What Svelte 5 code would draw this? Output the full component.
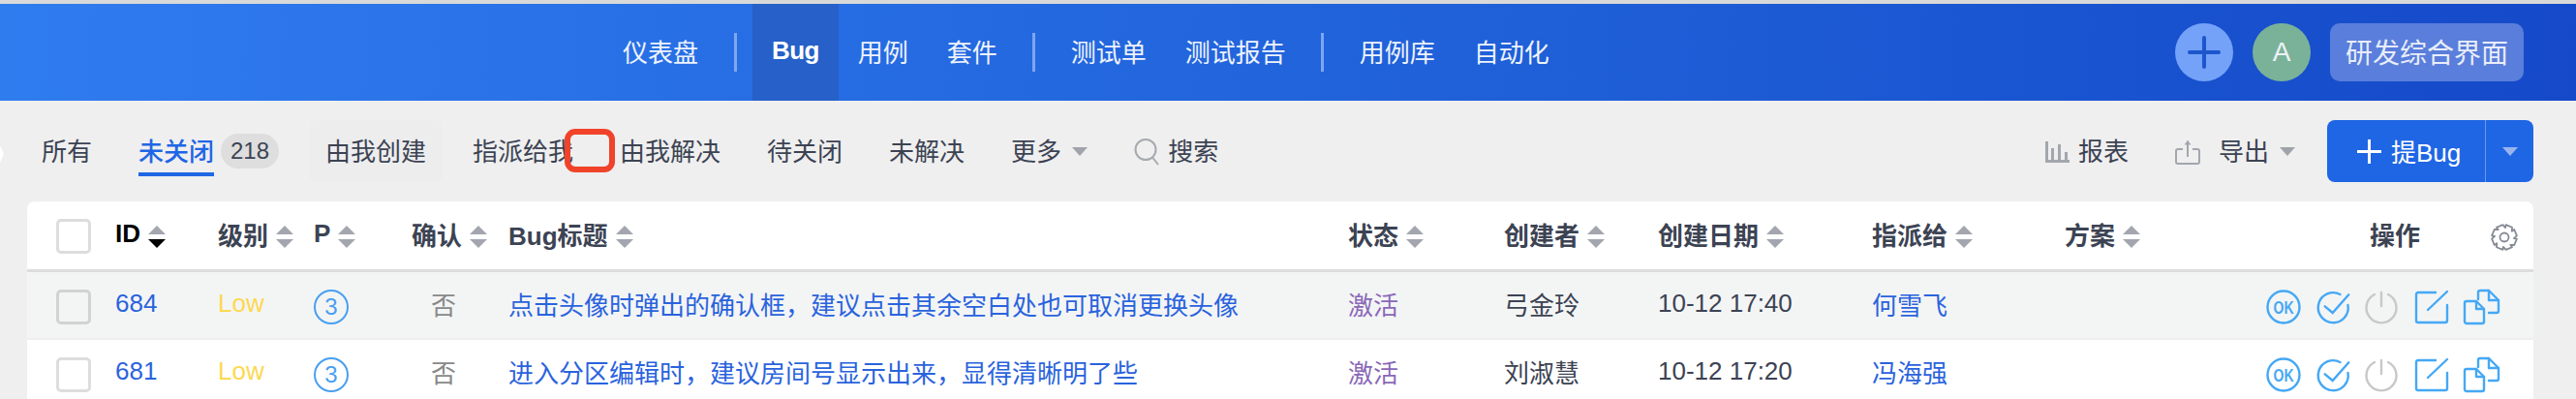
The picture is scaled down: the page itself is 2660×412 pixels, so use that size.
<script>
  const nav1 = ['用例', '套件']
  const nav2 = ['测试单', '测试报告']
  const nav3 = ['用例库', '自动化']

  const filters = ['指派给我', '由我解决', '待关闭', '未解决']

  const heads = [
    { label: 'ID', active: true },
    { label: '级别' },
    { label: 'P' },
    { label: '确认' },
    { label: 'Bug标题' },
    { label: '状态' },
    { label: '创建者' },
    { label: '创建日期' },
    { label: '指派给' },
    { label: '方案' }
  ]

  const bugs = [
    { id: 684, title: '点击头像时弹出的确认框，建议点击其余空白处也可取消更换头像', by: '弓金玲', date: '10-12 17:40', to: '何雪飞' },
    { id: 681, title: '进入分区编辑时，建议房间号显示出来，显得清晰明了些', by: '刘淑慧', date: '10-12 17:20', to: '冯海强' }
  ]

  // eight-toothed cog outline
  function cogPath(cx, cy, outer, inner) {
    const pts = []
    for (let t = 0; t < 8; t++) {
      const a = (t * Math.PI) / 4 + Math.PI / 8
      for (const [d, r] of [[-0.27, outer], [0.27, outer], [0.5, inner]]) {
        pts.push(`${(cx + r * Math.cos(a + d)).toFixed(2)} ${(cy + r * Math.sin(a + d)).toFixed(2)}`)
      }
    }
    return 'M' + pts.join('L') + 'Z'
  }
</script>

<div class="page">
  <header class="topbar">
    <nav class="nav">
      <a class="nav-item">仪表盘</a>
      <i class="nav-sep"></i>
      <a class="nav-item on">Bug</a>
      {#each nav1 as n}<a class="nav-item">{n}</a>{/each}
      <i class="nav-sep"></i>
      {#each nav2 as n}<a class="nav-item">{n}</a>{/each}
      <i class="nav-sep"></i>
      {#each nav3 as n}<a class="nav-item">{n}</a>{/each}
    </nav>
    <div class="top-right">
      <span class="add">
        <svg width="34" height="34" viewBox="0 0 34 34"><path d="M17 2V32M2 17H32" stroke="#1d56cc" stroke-width="4" stroke-linecap="round" fill="none" /></svg>
      </span>
      <span class="avatar">A</span>
      <span class="switch">研发综合界面</span>
    </div>
  </header>

  <section class="toolbar">
    <i class="edge"></i>
    <a class="tab">所有</a>
    <a class="tab current"><span class="tab-text">未关闭</span><span class="badge">218</span></a>
    <a class="tab boxed">由我创建</a>
    {#each filters as f}<a class="tab">{f}</a>{/each}
    <a class="tab">更多<i class="caret"></i></a>
    <a class="tab search">
      <svg width="26" height="28" viewBox="0 0 26 28" fill="none" stroke="#a6a9b0" stroke-width="2"><circle cx="12" cy="11.500" r="10.500" /><path d="M19 19.500L25 27" /></svg>
      搜索
    </a>
    <span class="mark"></span>

    <div class="actions">
      <a class="act">
        <svg width="25" height="22" viewBox="0 0 25 22" fill="#a3a6ae"><path d="M0 0H3V19H25V22H0Z" /><rect x="6" y="7" width="3" height="12" /><rect x="13" y="3" width="3" height="16" /><rect x="20" y="11" width="3" height="8" /></svg>
        报表
      </a>
      <a class="act export">
        <svg width="26" height="26" viewBox="0 0 26 26" fill="none" stroke="#a3a6ae" stroke-width="2"><path d="M8 10H3a2 2 0 0 0-2 2V23a2 2 0 0 0 2 2H23a2 2 0 0 0 2-2V12a2 2 0 0 0-2-2H18" /><path d="M13 18V1.500" /><path d="M9.500 5.500L13 1L16.500 5.500Z" fill="#a3a6ae" stroke="none" /></svg>
        <span class="export-text">导出</span><i class="caret"></i>
      </a>
      <div class="create">
        <a class="create-main">
          <svg width="27" height="27" viewBox="0 0 27 27"><path d="M13.500 1V26M1 13.500H26" stroke="#fff" stroke-width="3" fill="none" /></svg>
          提Bug
        </a>
        <a class="create-more"><i class="caret light"></i></a>
      </div>
    </div>
  </section>

  <section class="card">
    <div class="row head">
      <span class="check"></span>
      {#each heads as h}
        <span class="th" class:dark={h.active}>
          {h.label}
          <span class="sort" class:active={h.active}><i class="up"></i><i class="down"></i></span>
        </span>
      {/each}
      <span class="ops-head">
        <span class="ops-title">操作</span>
        <svg class="gear" width="28" height="28" viewBox="0 0 28 28" fill="none" stroke="#858a93" stroke-width="1.800" stroke-linejoin="round"><path d={cogPath(14, 14, 13, 10)} /><circle cx="14" cy="14" r="4.500" /></svg>
      </span>
    </div>

    {#each bugs as b, i}
      <div class="row body" class:hover={i === 0}>
        <span class="check"></span>
        <a class="id cell">{b.id}</a>
        <span class="low cell">Low</span>
        <span class="pri"><b>3</b></span>
        <span class="no cell">否</span>
        <a class="title cell">{b.title}</a>
        <span class="status cell">激活</span>
        <span class="cell">{b.by}</span>
        <span class="cell">{b.date}</span>
        <a class="to cell">{b.to}</a>
        <span></span>
        <span class="ops">
          <svg width="36" height="36" viewBox="0 0 36 36" fill="none" stroke="#45a8f5" stroke-width="2.400">
            <circle cx="18" cy="18" r="16.500" />
            <text x="18" y="24.500" text-anchor="middle" textLength="21" lengthAdjust="spacingAndGlyphs" stroke="none" fill="#45a8f5" font-size="18" font-weight="700">OK</text>
          </svg>
          <svg width="36" height="36" viewBox="0 0 36 36" fill="none" stroke="#45a8f5" stroke-width="2.400" stroke-linecap="round">
            <path d="M25.500 5A15.500 15.500 0 1 0 33.500 16" />
            <path d="M9.700 17.300L17.700 24L34.300 5.300" />
          </svg>
          <svg width="36" height="36" viewBox="0 0 36 36" fill="none" stroke="#c8c8c8" stroke-width="2.400" stroke-linecap="round">
            <path d="M10 5A15.500 15.500 0 1 0 24 5" />
            <path d="M17 3V17" />
          </svg>
          <svg width="36" height="36" viewBox="0 0 36 36" fill="none" stroke="#45a8f5" stroke-width="2.400" stroke-linecap="round">
            <path d="M22 3H4a2 2 0 0 0-2 2V32a2 2 0 0 0 2 2H32a2 2 0 0 0 2-2V16" />
            <path d="M14 21L34 2" />
          </svg>
          <svg width="36" height="36" viewBox="0 0 36 36" fill="none" stroke="#45a8f5" stroke-width="2.400" stroke-linejoin="round" stroke-linecap="round">
            <path d="M3 12H13L21 20V33a2 2 0 0 1-2 2H3a2 2 0 0 1-2-2V14a2 2 0 0 1 2-2Z" />
            <path d="M13 12V20H21" />
            <path d="M15 10V3a2 2 0 0 1 2-2H26L36 11V22a2 2 0 0 1-2 2H26" />
            <path d="M26 1V11H36" />
          </svg>
        </span>
      </div>
    {/each}
  </section>
</div>

<style>
  :global(html), :global(body) {
    margin: 0;
    overflow: hidden;
  }

  .page {
    height: 412px;
    overflow: hidden;
    background: #efefef;
    border-top: 4px solid #d9d9d9;
    box-sizing: border-box;
    font-family: "Liberation Sans", "Noto Sans CJK SC", sans-serif;
    font-size: 26px;
    color: #3c4353;
  }

  a { color: inherit; text-decoration: none; }
  i { display: block; }

  .topbar {
    height: 100px;
    display: flex;
    align-items: center;
    background: linear-gradient(92deg, #2f7cef 0%, #1c5ad4 70%, #1549c9 100%);
    color: #fff;
  }

  .nav {
    height: 100%;
    display: flex;
    align-items: center;
    padding-left: 623px;
  }

  .nav-item {
    height: 100%;
    display: flex;
    align-items: center;
    padding: 0 20px 3px;
    box-sizing: border-box;
    color: #eef3fd;
  }

  .nav-item.on {
    background: #2660c8;
    color: #fff;
    font-weight: 700;
    letter-spacing: -0.6px;
  }

  .nav-sep {
    width: 3px;
    height: 40px;
    margin: 0 16.500px;
    background: #7fa6ee;
  }

  .top-right {
    margin-left: auto;
    margin-right: 54px;
    display: flex;
    align-items: center;
    gap: 20px;
  }

  .add, .avatar {
    width: 60px;
    height: 60px;
    border-radius: 50%;
    display: flex;
    align-items: center;
    justify-content: center;
  }

  .add { background: #74a2f8; }

  .avatar {
    background: #7ab299;
    color: #edf2f7;
    font-size: 28px;
  }

  .switch {
    width: 200px;
    height: 60px;
    padding-bottom: 3px;
    box-sizing: border-box;
    border-radius: 10px;
    background: #5a7edb;
    color: #e8edf9;
    font-size: 28px;
    display: flex;
    align-items: center;
    justify-content: center;
  }

  .toolbar {
    position: relative;
    height: 104px;
    display: flex;
    align-items: center;
    padding: 0 44px 0 26px;
    box-sizing: border-box;
    gap: 14px;
  }

  .edge {
    position: absolute;
    left: 0;
    top: 46px;
    width: 4px;
    height: 18px;
    background: #fff;
    clip-path: polygon(0 0, 100% 50%, 0 100%);
  }

  .tab {
    height: 64px;
    padding: 0 17px 4px;
    box-sizing: border-box;
    display: flex;
    align-items: center;
    border-radius: 8px;
  }

  .tab.boxed { background: #ededed; }

  .tab-text {
    position: relative;
    color: #1f66e5;
    font-weight: 500;
  }

  .tab-text::after {
    content: "";
    position: absolute;
    left: 0;
    right: 0;
    bottom: -9px;
    height: 4px;
    background: #1f66e5;
  }

  .badge {
    margin: 4px 0 0 7px;
    width: 60px;
    height: 36px;
    border-radius: 18px;
    background: #dedede;
    text-align: center;
    line-height: 36px;
    font-size: 24px;
  }

  .caret {
    width: 0;
    height: 0;
    margin: 4px 0 0 11px;
    border-left: 8px solid transparent;
    border-right: 8px solid transparent;
    border-top: 9px solid #a0a3aa;
  }

  .caret.light { border-top-color: #9ab5ee; margin: 0; }

  .search { gap: 9px; }
  .search svg { margin-top: 6px; }

  .mark {
    position: absolute;
    left: 583px;
    top: 29px;
    width: 40px;
    height: 33px;
    border: 6px solid #f0432a;
    border-radius: 11px;
  }

  .actions {
    margin-left: auto;
    display: flex;
    align-items: center;
  }

  .act {
    display: flex;
    align-items: center;
    gap: 9px;
    padding-bottom: 3px;
  }

  .act svg { margin-top: 5px; }

  .export { margin-left: 48px; margin-right: 33px; }
  .export-text { margin-left: 10px; }
  .export .caret { margin: 3px 0 0 2px; }

  .create {
    width: 213px;
    height: 64px;
    display: flex;
    background: #1f66e5;
    border-radius: 8px;
    color: #fff;
  }

  .create-main {
    width: 164px;
    display: flex;
    align-items: center;
    gap: 9px;
    padding: 0 0 2px 30px;
    box-sizing: border-box;
    border-right: 1px solid #6a97ec;
  }

  .create-main svg { margin-top: 2px; }

  .create-more {
    flex: 1;
    display: flex;
    align-items: center;
    justify-content: center;
  }

  .card {
    margin: 0 44px 0 28px;
    background: #fff;
    border-radius: 8px 8px 0 0;
    overflow: hidden;
  }

  .row {
    display: grid;
    grid-template-columns: 61px 106px 99px 101px 100px 867px 161px 159px 221px 199px 199px 1fr;
    align-items: center;
    padding-left: 30px;
  }

  .head {
    height: 73px;
    border-bottom: 3px solid #dddddd;
    box-sizing: border-box;
  }

  .body {
    height: 70px;
    border-bottom: 2px solid #eeeeee;
    box-sizing: border-box;
  }

  .body.hover { background: #f3f5f5; }

  .check {
    width: 36px;
    height: 36px;
    box-sizing: border-box;
    border: 3px solid #dddddd;
    border-radius: 5px;
    background: #fff;
    margin-top: 2px;
  }

  .body .check, .pri, .ops { margin-top: 4px; }

  .hover .check {
    border-color: #d2d2d2;
    background: #f3f5f5;
  }

  .th {
    display: flex;
    align-items: center;
    gap: 8px;
    padding-bottom: 4px;
    font-weight: 700;
    color: #3c4353;
    white-space: nowrap;
  }

  .th.dark { color: #000; }

  .sort {
    display: flex;
    flex-direction: column;
    gap: 5px;
    margin-top: 7px;
  }

  .up {
    width: 0;
    height: 0;
    border-left: 9px solid transparent;
    border-right: 9px solid transparent;
    border-bottom: 9px solid #a3a6ae;
  }

  .down {
    width: 0;
    height: 0;
    border-left: 9px solid transparent;
    border-right: 9px solid transparent;
    border-top: 9px solid #a3a6ae;
  }

  .sort.active .down { border-top-color: #000; }

  .ops-head {
    display: flex;
    align-items: center;
    padding-left: 116px;
  }

  .ops-title { font-weight: 700; white-space: nowrap; padding-bottom: 4px; }

  .gear { margin: 4px 0 0 73px; flex: none; }

  .cell { white-space: nowrap; margin-bottom: 3px; }

  .id, .title, .to { color: #2a63dd; }

  .low { color: #fdd850; }

  .pri b {
    display: block;
    width: 36px;
    height: 36px;
    box-sizing: border-box;
    border: 2px solid #4a9ff0;
    border-radius: 50%;
    color: #4a9ff0;
    font-weight: 400;
    font-size: 24px;
    line-height: 32px;
    text-align: center;
  }

  .no {
    padding-left: 20px;
    color: #888;
  }

  .status { color: #8a68b8; }

  .ops {
    display: flex;
    align-items: center;
    gap: 15px;
    padding-left: 9px;
  }

  .ops svg { flex: none; overflow: visible; }
</style>
